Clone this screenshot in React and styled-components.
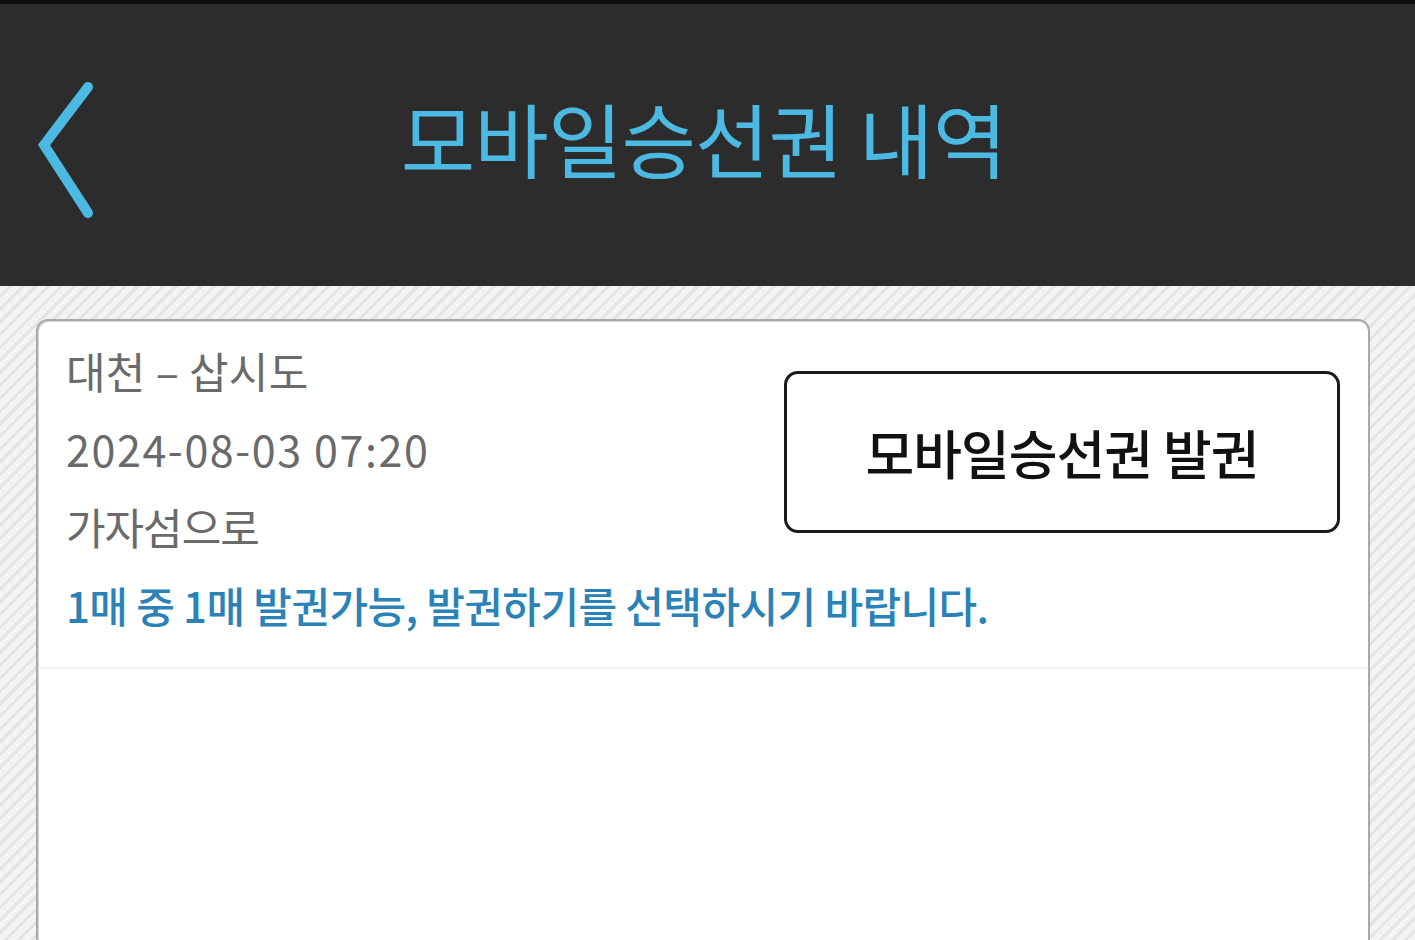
import React from 'react';
import styled, { createGlobalStyle } from 'styled-components';

const GlobalStyle = createGlobalStyle`
  html, body {
    margin: 0;
    padding: 0;
    height: 100%;
    overflow: hidden;
  }

  body {
    font-family: 'Noto Sans CJK KR', 'Noto Sans', sans-serif;
    background: #f0f0f0;
  }
`;

const Screen = styled.div`
  display: flex;
  flex-direction: column;
  height: 940px;
  overflow: hidden;
`;

const Header = styled.header`
  position: relative;
  display: flex;
  align-items: center;
  justify-content: center;
  height: 282px;
  flex-shrink: 0;
  background: #2c2c2c;
  border-top: 4px solid #0c0c0c;
  box-sizing: content-box;
`;

const BackButton = styled.button`
  position: absolute;
  left: 34px;
  top: 73px;
  width: 64px;
  height: 146px;
  padding: 0;
  border: none;
  background: transparent;
  cursor: pointer;

  svg {
    display: block;
  }
`;

const Title = styled.h1`
  margin: -18px 0 0 -8px;
  font-size: 81px;
  font-weight: 400;
  letter-spacing: -1px;
  color: #4cb9e3;
  line-height: 1;
`;

const Body = styled.main`
  flex: 1;
  padding: 33px 45px 0 36px;
  background: repeating-linear-gradient(
    135deg,
    #f3f3f3 0px,
    #f3f3f3 6px,
    #e4e4e4 6px,
    #e4e4e4 9px
  );
`;

const Card = styled.section`
  min-height: 800px;
  background: #fff;
  border: 2px solid #a9a9a9;
  border-radius: 12px;
  box-shadow: inset 1px 1px 0 #d8d8d8;
`;

const Summary = styled.div`
  display: grid;
  grid-template-columns: 1fr 556px;
  grid-template-rows: repeat(4, 78px);
  padding: 10px 28px 24px 28px;
  border-bottom: 2px solid #efefef;
`;

const InfoLine = styled.div`
  grid-column: 1;
  display: flex;
  align-items: center;
  font-size: 43px;
  font-weight: 400;
  color: #6a6a6a;
  letter-spacing: ${(p) => (p.$spacing ? `${p.$spacing}px` : '0.3px')};
  white-space: nowrap;
`;

const Notice = styled.div`
  grid-column: 1 / -1;
  grid-row: 4;
  display: flex;
  align-items: center;
  font-size: 42px;
  font-weight: 500;
  color: #2b82b8;
  letter-spacing: -0.6px;
  white-space: nowrap;
`;

const IssueButton = styled.button`
  grid-column: 2;
  grid-row: 1 / 4;
  align-self: center;
  height: 162px;
  margin-top: 8px;
  border: 3px solid #1a1a1a;
  border-radius: 14px;
  background: #fff;
  font-family: inherit;
  font-size: 53px;
  font-weight: 500;
  letter-spacing: -1px;
  color: #111;
  cursor: pointer;
`;

const ChevronLeft = () => (
  <svg width="64" height="146" viewBox="0 0 64 146">
    <polyline
      points="54,10 10,68 54,136"
      fill="none"
      stroke="#4cb9e3"
      strokeWidth="10"
      strokeLinecap="round"
      strokeLinejoin="miter"
    />
  </svg>
);

const App = () => (
  <Screen>
    <GlobalStyle />
    <Header>
      <BackButton aria-label="뒤로">
        <ChevronLeft />
      </BackButton>
      <Title>모바일승선권 내역</Title>
    </Header>
    <Body>
      <Card>
        <Summary>
          <InfoLine>대천 – 삽시도</InfoLine>
          <InfoLine $spacing={1.6}>2024-08-03 07:20</InfoLine>
          <InfoLine $spacing={-1}>가자섬으로</InfoLine>
          <IssueButton>모바일승선권 발권</IssueButton>
          <Notice>1매 중 1매 발권가능, 발권하기를 선택하시기 바랍니다.</Notice>
        </Summary>
      </Card>
    </Body>
  </Screen>
);

export default App;
